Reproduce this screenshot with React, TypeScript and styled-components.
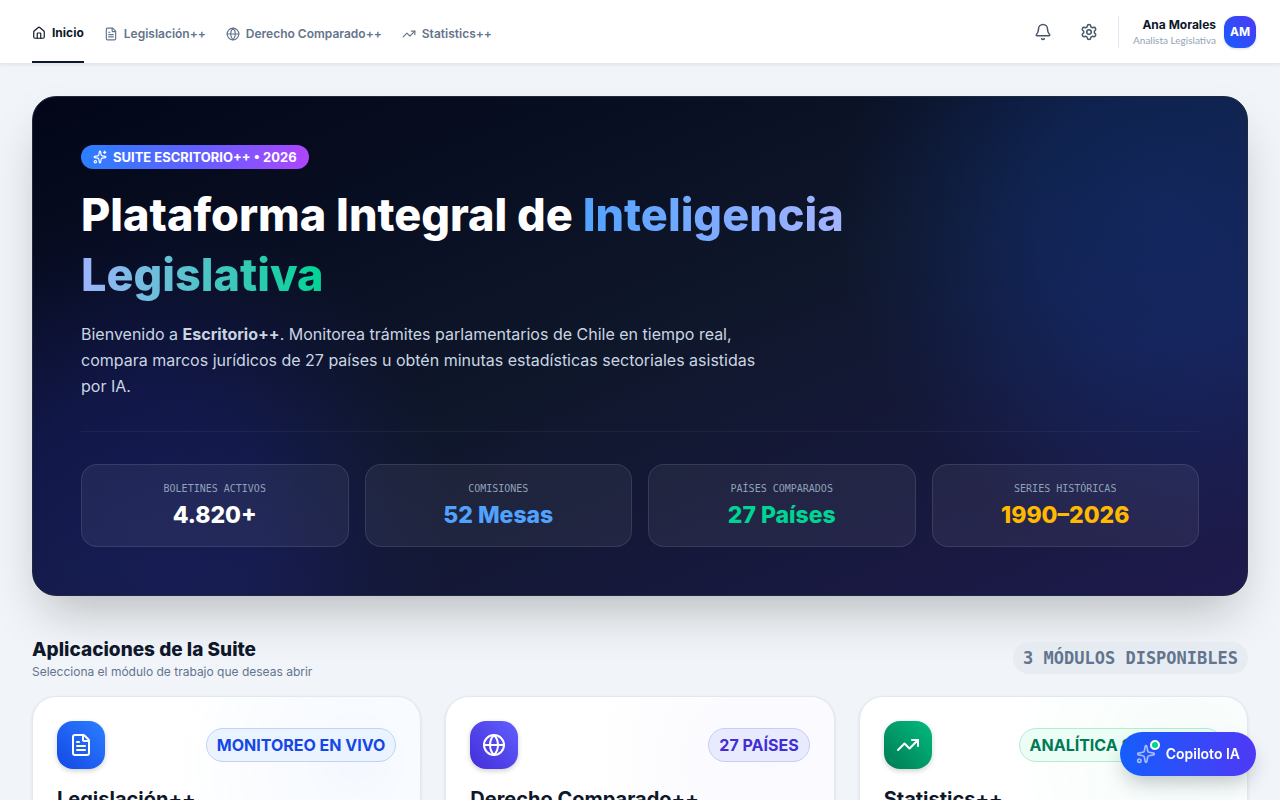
import React from "react";
import styled, { createGlobalStyle, css } from "styled-components";
import { Bell, FileText, Globe, House, Settings, Sparkles, TrendingUp } from "lucide-react";
import type { LucideIcon } from "lucide-react";

const GlobalStyle = createGlobalStyle`
  *, *::before, *::after { box-sizing: border-box; }
  body {
    margin: 0;
    background: #f1f5f9;
    color: #0f172a;
    font-family: Inter, "Noto Sans", sans-serif;
    font-size: 16px;
    line-height: 24px;
    -webkit-font-smoothing: antialiased;
  }
  h1, h2, h3, p, dl, dd, ul { margin: 0; padding: 0; }
  button { font: inherit; border: 0; background: none; cursor: pointer; }
  a { color: inherit; text-decoration: none; }
`;

const mono = css`
  font-family: "DejaVu Sans Mono", "Liberation Mono", monospace;
`;

const TopBar = styled.header`
  position: sticky;
  top: 0;
  z-index: 10;
  display: flex;
  justify-content: space-between;
  height: 64px;
  padding: 0 24px 0 32px;
  background: #ffffff;
  border-bottom: 1px solid #e2e8f0;
  box-shadow: 0 1px 3px rgba(15, 23, 42, 0.08);
`;

const Nav = styled.nav`
  display: flex;
  gap: 20px;
`;

const NavLink = styled.a<{ $active?: boolean }>`
  display: flex;
  align-items: center;
  gap: 6px;
  padding-top: 4px;
  font-size: 12px;
  line-height: 16px;
  white-space: nowrap;
  font-weight: ${(p) => (p.$active ? 700 : 600)};
  color: ${(p) => (p.$active ? "#0f172a" : "#64748b")};
  border-bottom: ${(p) => (p.$active ? "2px solid #0f172a" : "0")};
`;

const Tools = styled.div`
  display: flex;
  align-items: center;
  gap: 8px;
`;

const IconButton = styled.button`
  display: flex;
  padding: 10px;
  border-radius: 12px;
  color: #475569;
`;

const Profile = styled.div`
  display: flex;
  align-items: center;
  gap: 8px;
  height: 32px;
  margin-left: 2px;
  padding-left: 14px;
  border-left: 1px solid #e2e8f0;
`;

const ProfileText = styled.div`
  text-align: right;
`;

const ProfileName = styled.div`
  font-size: 12px;
  font-weight: 700;
  line-height: 16px;
`;

const ProfileRole = styled.div`
  font-family: Lato, sans-serif;
  font-size: 10px;
  line-height: 14px;
  color: #94a3b8;
`;

const Avatar = styled.div`
  display: grid;
  place-items: center;
  width: 32px;
  height: 32px;
  border-radius: 12px;
  background: linear-gradient(to top right, #155dfc, #4f39f6);
  box-shadow: 0 1px 3px rgba(15, 23, 42, 0.15);
  color: #ffffff;
  font-size: 12px;
  font-weight: 700;
`;

const Main = styled.main`
  padding: 32px;
`;

const Hero = styled.section`
  padding: 48px;
  border: 1px solid #1e293b;
  border-radius: 24px;
  background:
    radial-gradient(circle 330px at calc(100% - 80px) 120px, rgba(21, 93, 252, 0.22), rgba(21, 93, 252, 0.18) 40%, rgba(21, 93, 252, 0.05) 80%, rgba(21, 93, 252, 0) 100%),
    radial-gradient(circle 310px at 110px calc(100% - 80px), rgba(50, 50, 240, 0.2), rgba(50, 50, 240, 0.17) 40%, rgba(50, 50, 240, 0.04) 80%, rgba(50, 50, 240, 0) 100%),
    linear-gradient(to bottom right, #020618, #0f172b 50%, #1e1a4d);
  box-shadow: 0 25px 50px -12px rgba(0, 0, 0, 0.25);
  color: #ffffff;
`;

const SuiteBadge = styled.div`
  display: flex;
  align-items: center;
  gap: 6px;
  width: fit-content;
  padding: 4px 12px;
  border-radius: 12px;
  background: linear-gradient(to right, #2b7fff, #615fff, #ad46ff);
  font-size: 13px;
  font-weight: 700;
  line-height: 16px;
`;

const HeroTitle = styled.h1`
  max-width: 800px;
  margin-top: 16px;
  font-size: 45px;
  font-weight: 800;
  line-height: 60px;
`;

const Highlight = styled.span`
  background: linear-gradient(to right, #51a2ff, #a3b3ff, #00d492);
  -webkit-background-clip: text;
  background-clip: text;
  color: transparent;
`;

const HeroText = styled.p`
  max-width: 700px;
  margin-top: 16px;
  line-height: 26px;
  color: #cad5e2;

  strong { font-weight: 700; }
`;

const Stats = styled.dl`
  display: grid;
  grid-template-columns: repeat(4, 1fr);
  gap: 16px;
  margin-top: 32px;
  padding-top: 32px;
  border-top: 1px solid rgba(255, 255, 255, 0.05);
`;

const Stat = styled.div`
  padding: 16px;
  border: 1px solid rgba(255, 255, 255, 0.1);
  border-radius: 16px;
  background: rgba(255, 255, 255, 0.06);
  text-align: center;
`;

const StatLabel = styled.dt`
  ${mono}
  font-size: 10px;
  line-height: 16px;
  color: #90a1b9;
  text-transform: uppercase;
`;

const StatValue = styled.dd<{ $color: string }>`
  padding-top: 3px;
  font-size: 23px;
  font-weight: 800;
  line-height: 30px;
  color: ${(p) => p.$color};
`;

const SectionHead = styled.div`
  display: flex;
  align-items: center;
  justify-content: space-between;
  margin: 40px 0 16px;
`;

const SectionTitle = styled.h2`
  font-size: 19px;
  font-weight: 800;
  line-height: 28px;
`;

const SectionNote = styled.p`
  font-size: 12px;
  line-height: 16px;
  color: #62748e;
`;

const CountPill = styled.span`
  ${mono}
  padding: 4px 10px;
  border-radius: 16px;
  background: rgba(226, 232, 240, 0.7);
  color: #62748e;
  font-size: 17px;
  font-weight: 700;
`;

const Cards = styled.div`
  display: grid;
  grid-template-columns: repeat(3, 1fr);
  gap: 24px;
`;

const Card = styled.article<{ $glow: string }>`
  padding: 24px;
  border: 1px solid #e2e8f0;
  border-radius: 24px;
  background: radial-gradient(circle 180px at calc(100% - 64px) 64px, ${(p) => p.$glow}, transparent), #ffffff;
  box-shadow: 0 1px 3px rgba(15, 23, 42, 0.1);
`;

const CardTop = styled.div`
  display: flex;
  align-items: center;
  justify-content: space-between;
`;

const CardIcon = styled.div<{ $from: string; $to: string }>`
  display: grid;
  place-items: center;
  width: 48px;
  height: 48px;
  border-radius: 16px;
  background: linear-gradient(to top right, ${(p) => p.$from}, ${(p) => p.$to});
  box-shadow: 0 2px 5px rgba(15, 23, 42, 0.2);
  color: #ffffff;
`;

const CardTag = styled.span<{ $ink: string; $fill: string; $line: string }>`
  padding: 4px 10px;
  border: 1px solid ${(p) => p.$line};
  border-radius: 17px;
  background: ${(p) => p.$fill};
  color: ${(p) => p.$ink};
  font-weight: 700;
  white-space: nowrap;
`;

const CardTitle = styled.h3`
  margin-top: 16px;
  font-size: 20px;
  font-weight: 700;
  line-height: 28px;
`;

const CopilotButton = styled.button`
  position: fixed;
  right: 24px;
  bottom: 24px;
  z-index: 20;
  display: flex;
  align-items: center;
  gap: 10px;
  height: 44px;
  padding: 0 16px;
  border-radius: 22px;
  background: linear-gradient(to right, #155dfc, #4f39f6);
  box-shadow: 0 10px 20px -4px rgba(15, 23, 42, 0.25);
  color: #ffffff;
  font-size: 14px;
  font-weight: 600;
`;

const CopilotIcon = styled.span`
  position: relative;
  display: flex;
  color: #a3bbff;
`;

const OnlineDot = styled.span`
  position: absolute;
  top: -4px;
  right: -4px;
  width: 10px;
  height: 10px;
  border: 2px solid #ffffff;
  border-radius: 50%;
  background: #00d492;
`;

interface NavItem {
  label: string;
  icon: LucideIcon;
  active?: boolean;
}

const navItems: NavItem[] = [
  { label: "Inicio", icon: House, active: true },
  { label: "Legislación++", icon: FileText },
  { label: "Derecho Comparado++", icon: Globe },
  { label: "Statistics++", icon: TrendingUp },
];

const stats = [
  { label: "Boletines activos", value: "4.820+", color: "#ffffff" },
  { label: "Comisiones", value: "52 Mesas", color: "#51a2ff" },
  { label: "Países comparados", value: "27 Países", color: "#00d492" },
  { label: "Series históricas", value: "1990–2026", color: "#ffb900" },
];

const apps = [
  {
    title: "Legislación++", tag: "MONITOREO EN VIVO", icon: FileText,
    from: "#1447e6", to: "#2b7fff", ink: "#1447e6", fill: "#eaf3fe", line: "#bfd3f2", glow: "rgba(43, 127, 255, 0.05)",
  },
  {
    title: "Derecho Comparado++", tag: "27 PAÍSES", icon: Globe,
    from: "#432dd7", to: "#615fff", ink: "#432dd7", fill: "#e8ebfe", line: "#c9cdf5", glow: "rgba(97, 95, 255, 0.04)",
  },
  {
    title: "Statistics++", tag: "ANALÍTICA SECTORIAL", icon: TrendingUp,
    from: "#007a55", to: "#00bc7d", ink: "#007a55", fill: "#ecfdf5", line: "#b4ecd5", glow: "rgba(0, 188, 125, 0.04)",
  },
];

export default function App() {
  return (
    <>
      <GlobalStyle />
      <TopBar>
        <Nav aria-label="Principal">
          {navItems.map(({ label, icon: Icon, active }) => (
            <NavLink key={label} href="#" $active={active} aria-current={active ? "page" : undefined}>
              <Icon size={14} />
              {label}
            </NavLink>
          ))}
        </Nav>
        <Tools>
          <IconButton type="button" aria-label="Notificaciones"><Bell size={18} /></IconButton>
          <IconButton type="button" aria-label="Configuración"><Settings size={18} /></IconButton>
          <Profile>
            <ProfileText>
              <ProfileName>Ana Morales</ProfileName>
              <ProfileRole>Analista Legislativa</ProfileRole>
            </ProfileText>
            <Avatar>AM</Avatar>
          </Profile>
        </Tools>
      </TopBar>

      <Main>
        <Hero>
          <SuiteBadge>
            <Sparkles size={14} />
            SUITE ESCRITORIO++ • 2026
          </SuiteBadge>
          <HeroTitle>
            Plataforma Integral de <Highlight>Inteligencia Legislativa</Highlight>
          </HeroTitle>
          <HeroText>
            Bienvenido a <strong>Escritorio++</strong>. Monitorea trámites parlamentarios de Chile en tiempo real,
            compara marcos jurídicos de 27 países u obtén minutas estadísticas sectoriales asistidas por IA.
          </HeroText>
          <Stats>
            {stats.map((s) => (
              <Stat key={s.label}>
                <StatLabel>{s.label}</StatLabel>
                <StatValue $color={s.color}>{s.value}</StatValue>
              </Stat>
            ))}
          </Stats>
        </Hero>

        <SectionHead>
          <div>
            <SectionTitle>Aplicaciones de la Suite</SectionTitle>
            <SectionNote>Selecciona el módulo de trabajo que deseas abrir</SectionNote>
          </div>
          <CountPill>3 MÓDULOS DISPONIBLES</CountPill>
        </SectionHead>

        <Cards>
          {apps.map(({ title, tag, icon: Icon, from, to, ink, fill, line, glow }) => (
            <Card key={title} $glow={glow}>
              <CardTop>
                <CardIcon $from={from} $to={to}><Icon size={24} /></CardIcon>
                <CardTag $ink={ink} $fill={fill} $line={line}>{tag}</CardTag>
              </CardTop>
              <CardTitle>{title}</CardTitle>
            </Card>
          ))}
        </Cards>
      </Main>

      <CopilotButton type="button">
        <CopilotIcon>
          <Sparkles size={20} />
          <OnlineDot />
        </CopilotIcon>
        Copiloto IA
      </CopilotButton>
    </>
  );
}
